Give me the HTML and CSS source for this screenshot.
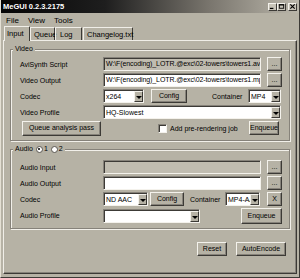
FILE: index.html
```html
<!DOCTYPE html>
<html>
<head>
<meta charset="utf-8">
<link rel="stylesheet" href="styles.css">
</head>
<body>
<div class="window">
  <div class="titlebar">
    <span class="title">MeGUI 0.2.3.2175</span>
    <div class="caps">
      <span class="cap"><svg width="8" height="7" viewBox="0 0 8 7"><rect x="1" y="5" width="4" height="1.4" fill="#000"/></svg></span>
      <span class="cap"><svg width="8" height="7" viewBox="0 0 8 7"><rect x="1.5" y="1.5" width="5" height="4" fill="none" stroke="#000" stroke-width="1"/><rect x="1" y="1" width="6" height="1.2" fill="#000"/></svg></span>
      <span class="cap close"><svg width="8" height="7" viewBox="0 0 8 7"><path d="M1.5 1 L6.5 6 M6.5 1 L1.5 6" stroke="#000" stroke-width="1.3"/></svg></span>
    </div>
  </div>
  <div class="menubar"><span>File</span><span>View</span><span>Tools</span></div>
  <div class="tabs">
    <div class="tab active t-input">Input</div>
    <div class="tab t-queue">Queue</div>
    <div class="tab t-log">Log</div>
    <div class="tab t-change">Changelog.txt</div>
  </div>
  <div class="panel">
    <div class="group video">
      <span class="legend">Video</span>
      <div class="row">
        <span class="lbl">AviSynth Script</span>
        <div class="text ro w158">W:\F(encoding)_LOTR.@exc\02-towers\towers1.avs</div>
        <div class="btn dots">...</div>
      </div>
      <div class="row">
        <span class="lbl">Video Output</span>
        <div class="text w158">W:\F(encoding)_LOTR.@exc\02-towers\towers1.mp4</div>
        <div class="btn dots">...</div>
      </div>
      <div class="row">
        <span class="lbl">Codec</span>
        <div class="select w40"><span class="val">x264</span><span class="arrow"></span></div>
        <div class="btn config1">Config</div>
        <span class="cont1">Container</span>
        <div class="select w32"><span class="val">MP4</span><span class="arrow"></span></div>
      </div>
      <div class="row">
        <span class="lbl">Video Profile</span>
        <div class="select w177"><span class="val">HQ-Slowest</span><span class="arrow"></span></div>
      </div>
      <div class="row last">
        <div class="btn queue">Queue analysis pass</div>
        <span class="check"></span>
        <span class="checklbl">Add pre-rendering job</span>
        <div class="btn enq1">Enqueue</div>
      </div>
    </div>
    <div class="group audio">
      <span class="legend">Audio <span class="radio on"></span><span class="rl">1</span><span class="radio"></span><span class="rl">2</span></span>
      <div class="row">
        <span class="lbl">Audio Input</span>
        <div class="text ro w158"></div>
        <div class="btn dots">...</div>
      </div>
      <div class="row">
        <span class="lbl">Audio Output</span>
        <div class="text w158"></div>
        <div class="btn dots">...</div>
      </div>
      <div class="row">
        <span class="lbl">Codec</span>
        <div class="select w45"><span class="val">ND AAC</span><span class="arrow"></span></div>
        <div class="btn config2">Config</div>
        <span class="cont2">Container</span>
        <div class="select w35"><span class="val">MP4-AAC</span><span class="arrow"></span></div>
        <div class="btn x">X</div>
      </div>
      <div class="row prof">
        <span class="lbl">Audio Profile</span>
        <div class="select w97"><span class="val"></span><span class="arrow"></span></div>
        <div class="btn enq2">Enqueue</div>
      </div>
    </div>
    <div class="bottom">
      <div class="btn reset">Reset</div>
      <div class="btn auto">AutoEncode</div>
    </div>
  </div>
</div>
</body>
</html>
```

FILE: styles.css
```css
* { box-sizing: border-box; }
html, body { margin: 0; padding: 0; }
body {
  background: #b6b2a5;
  font-family: "Liberation Sans", Arial, sans-serif;
  font-size: 7px;
  color: #000;
}
.window {
  width: 300px;
  height: 278px;
  background: #b6b2a5;
  border-left: 1px solid #e4e0d4;
  border-right: 1px solid #3c3a36;
  border-bottom: 1px solid #3c3a36;
  display: flex;
  flex-direction: column;
  overflow: hidden;
}
.titlebar {
  height: 13px;
  flex: none;
  margin-left: -1px;
  margin-right: -1px;
  background: linear-gradient(90deg, #050505 0%, #1e1e1e 35%, #7a766e 70%, #bcb8ac 100%);
  display: flex;
  align-items: center;
  justify-content: space-between;
  padding: 0 3px 0 3px;
}
.title {
  color: #fff;
  font-weight: bold;
  font-size: 7.5px;
}
.caps { display: flex; align-items: center; }
.cap {
  width: 9px;
  height: 8px;
  background: #c8c4b8;
  border-top: 1px solid #f4f2ec;
  border-left: 1px solid #f4f2ec;
  border-right: 1px solid #3c3a36;
  border-bottom: 1px solid #3c3a36;
  display: flex;
  align-items: center;
  justify-content: center;
}
.cap svg { display: block; }
.cap.close { margin-left: 2px; }
.menubar {
  height: 14px;
  flex: none;
  display: flex;
  align-items: center;
  gap: 9px;
  padding-left: 5px;
  font-size: 8px;
}
.tabs {
  height: 13px;
  flex: none;
  display: flex;
  align-items: flex-end;
  padding-left: 3px;
  position: relative;
  z-index: 1;
}
.tab {
  height: 13px;
  border-top: 1px solid #f0eee8;
  border-left: 1px solid #f0eee8;
  border-right: 1px solid #3c3a36;
  border-radius: 1px 1px 0 0;
  display: flex;
  align-items: center;
  padding-left: 3px;
  font-size: 7.5px;
}
.tab.active {
  height: 15px;
  margin-bottom: -1px;
  background: #b6b2a5;
  padding-left: 2px;
  padding-bottom: 1px;
}
.t-input { width: 26px; }
.t-queue { width: 25px; }
.t-log { width: 27px; padding-left: 4px; }
.t-change { width: 50px; margin-left: 1px; padding-left: 3px; }
.panel {
  flex: 1;
  margin: 0 2px 3px 2px;
  border-top: 1px solid #f0eee8;
  border-left: 1px solid #f0eee8;
  border-right: 1px solid #3c3a36;
  border-bottom: 1px solid #3c3a36;
  box-shadow: inset -1px -1px #86827a;
}
.group {
  position: relative;
  width: 280px;
  margin-left: 6px;
  border: 1px solid #86827a;
  box-shadow: inset 1px 1px #f2f0ea, 1px 1px #f2f0ea;
  padding: 0 6px 0 9px;
}
.video { margin-top: 8px; padding-top: 7px; padding-bottom: 5px; }
.audio { margin-top: 8px; padding-top: 10px; padding-bottom: 5px; }
.legend {
  position: absolute;
  top: -6px;
  left: 2px;
  height: 10px;
  line-height: 10px;
  padding: 0 2px;
  background: #b6b2a5;
  display: flex;
  align-items: center;
}
.row {
  height: 14px;
  display: flex;
  align-items: center;
  margin-bottom: 2px;
}
.row.last { margin-bottom: 0; }
.row.prof { height: 15px; margin-bottom: 0; }
.lbl { width: 83px; flex: none; white-space: nowrap; }
.text {
  height: 14px;
  background: #fff;
  border-top: 1px solid #86827a;
  border-left: 1px solid #86827a;
  border-right: 1px solid #f4f2ec;
  border-bottom: 1px solid #f4f2ec;
  box-shadow: inset 1px 1px #3c3a36;
  padding: 0 2px;
  line-height: 12px;
  white-space: nowrap;
  overflow: hidden;
  text-overflow: clip;
  letter-spacing: -0.1px;
  flex: none;
}
.text.ro { background: #c0bcb0; }
.w158 { width: 158px; }
.btn {
  height: 14px;
  flex: none;
  background: #b6b2a5;
  border-top: 1px solid #f4f2ec;
  border-left: 1px solid #f4f2ec;
  border-right: 1px solid #3c3a36;
  border-bottom: 1px solid #3c3a36;
  box-shadow: inset -1px -1px #86827a;
  display: flex;
  align-items: center;
  justify-content: center;
  white-space: nowrap;
  padding-bottom: 1px;
}
.dots { width: 15px; margin-left: 6px; }
.select {
  height: 14px;
  flex: none;
  background: #fff;
  border-top: 1px solid #86827a;
  border-left: 1px solid #86827a;
  border-right: 1px solid #f4f2ec;
  border-bottom: 1px solid #f4f2ec;
  box-shadow: inset 1px 1px #3c3a36;
  display: flex;
  align-items: stretch;
  padding: 1px 0 0 1px;
}
.select .val {
  flex: 1;
  overflow: hidden;
  white-space: nowrap;
  padding-left: 1px;
  line-height: 11px;
}
.select .arrow {
  width: 9px;
  flex: none;
  background: #b6b2a5;
  border-top: 1px solid #f4f2ec;
  border-left: 1px solid #f4f2ec;
  border-right: 1px solid #3c3a36;
  border-bottom: 1px solid #3c3a36;
  position: relative;
}
.select .arrow::after {
  content: "";
  position: absolute;
  left: 1px;
  top: 4px;
  border-left: 3px solid transparent;
  border-right: 3px solid transparent;
  border-top: 3px solid #000;
}
.w40 { width: 41px; }
.w32 { width: 33px; }
.w177 { width: 178px; }
.w45 { width: 45px; }
.w35 { width: 35px; }
.w97 { width: 97px; }
.config1 { width: 36px; margin-left: 7px; }
.cont1 { margin-left: 25px; width: 36px; }
.config2 { width: 34px; margin-left: 2px; }
.cont2 { margin-left: 6px; width: 35px; }
.x { width: 15px; margin-left: 7px; }
.queue { width: 79px; margin-left: 2px; height: 15px; }
.check {
  width: 9px;
  height: 9px;
  margin-left: 57px;
  background: #fff;
  border-top: 1px solid #86827a;
  border-left: 1px solid #86827a;
  border-right: 1px solid #f4f2ec;
  border-bottom: 1px solid #f4f2ec;
  box-shadow: inset 1px 1px #3c3a36;
  flex: none;
}
.checklbl { margin-left: 3px; white-space: nowrap; }
.enq1 { width: 30px; margin-left: auto; margin-right: 4px; height: 14px; }
.enq2 { width: 41px; margin-left: auto; margin-right: 1px; height: 16px; }
.radio {
  width: 7px;
  height: 7px;
  border-radius: 50%;
  background: #fff;
  border: 1px solid #5a5650;
  margin-left: 3px;
  position: relative;
  flex: none;
}
.radio.on::after {
  content: "";
  position: absolute;
  left: 1.5px;
  top: 1.5px;
  width: 2px;
  height: 2px;
  border-radius: 50%;
  background: #000;
}
.rl { margin-left: 1px; }
.bottom {
  display: flex;
  justify-content: flex-end;
  gap: 9px;
  padding-right: 10px;
  margin-top: 13px;
}
.reset { width: 30px; }
.auto { width: 50px; }
```
